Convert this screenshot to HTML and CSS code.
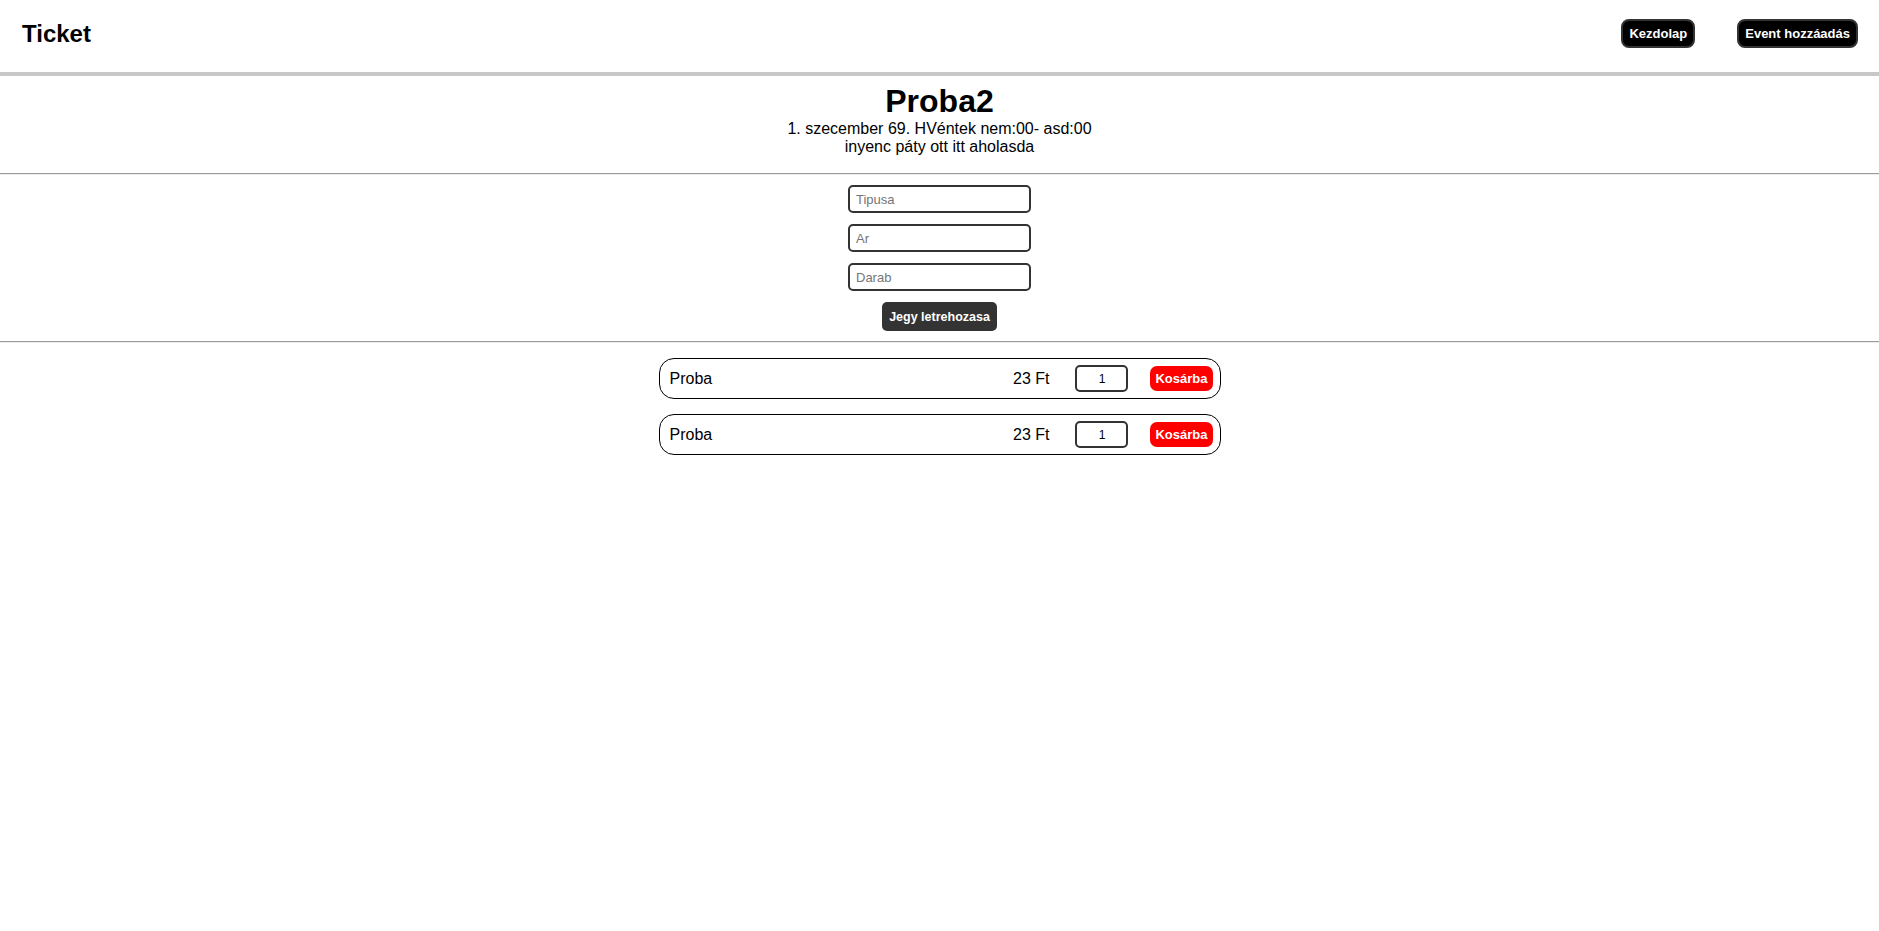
FILE: index.html
```html
<!DOCTYPE html>
<html lang="hu">
<head>
<meta charset="utf-8">
<title>Ticket</title>
<link rel="stylesheet" href="styles.css">
</head>
<body>
<header class="topbar">
  <div class="brand">Ticket</div>
  <nav class="nav">
    <button class="nav-btn">Kezdolap</button>
    <button class="nav-btn">Event hozzáadás</button>
  </nav>
</header>
<section class="event">
  <h1 class="event-title">Proba2</h1>
  <div class="event-line">1. szecember 69. HVéntek nem:00- asd:00</div>
  <div class="event-line">inyenc páty ott itt aholasda</div>
</section>
<hr class="divider">
<form class="ticket-form">
  <input class="field" type="text" placeholder="Tipusa">
  <input class="field" type="text" placeholder="Ar">
  <input class="field" type="text" placeholder="Darab">
  <button class="create-btn" type="button">Jegy letrehozasa</button>
</form>
<hr class="divider">
<section class="tickets">
  <div class="ticket">
    <span class="ticket-name">Proba</span>
    <span class="ticket-price">23 Ft</span>
    <input class="ticket-qty" type="text" value="1">
    <button class="buy-btn" type="button">Kosárba</button>
  </div>
  <div class="ticket">
    <span class="ticket-name">Proba</span>
    <span class="ticket-price">23 Ft</span>
    <input class="ticket-qty" type="text" value="1">
    <button class="buy-btn" type="button">Kosárba</button>
  </div>
</section>
</body>
</html>
```
FILE: styles.css
```css
html, body {
  margin: 0;
  padding: 0;
  background: #fff;
  color: #000;
  font-family: "Liberation Sans", Arial, sans-serif;
}

.topbar {
  display: flex;
  align-items: center;
  justify-content: space-between;
  padding: 19px 21px 24px 22px;
  border-bottom: 4px solid #c8c8c8;
}

.brand {
  font-size: 24px;
  font-weight: bold;
}

.nav {
  display: flex;
  gap: 42px;
}

.nav-btn {
  font-family: "Liberation Sans", Arial, sans-serif;
  font-size: 13px;
  font-weight: bold;
  line-height: 15px;
  color: #fff;
  background: #000;
  border: 2px solid #333;
  border-radius: 8px;
  padding: 5px 6px;
}

.event {
  text-align: center;
  padding: 7px 0 9px;
}

.event-title {
  margin: 0;
  font-size: 32px;
  font-weight: bold;
}

.event-line {
  font-size: 16px;
}

.divider {
  margin: 8px 0;
  border: 0;
  border-top: 1px solid #9a9a9a;
  border-bottom: 1px solid #eeeeee;
  height: 0;
}

.ticket-form {
  display: flex;
  flex-direction: column;
  align-items: center;
  gap: 11px;
  padding: 2px 0;
  margin: 0;
}

.field {
  box-sizing: border-box;
  width: 183px;
  height: 28px;
  border: 2px solid #333;
  border-radius: 5px;
  padding: 0 6px;
  font-family: "Liberation Sans", Arial, sans-serif;
  font-size: 13px;
  outline: none;
}

.field::placeholder {
  color: #757575;
}

.create-btn {
  box-sizing: border-box;
  height: 29px;
  padding: 0 7px;
  border: 0;
  border-radius: 5px;
  background: #333;
  color: #fff;
  font-family: "Liberation Sans", Arial, sans-serif;
  font-size: 12.5px;
  font-weight: bold;
}

.tickets {
  display: flex;
  flex-direction: column;
  align-items: center;
  gap: 15px;
  padding-top: 7px;
}

.ticket {
  box-sizing: border-box;
  display: flex;
  align-items: center;
  width: 562px;
  height: 41px;
  border: 1px solid #000;
  border-radius: 15px;
  padding: 0 7px 0 10px;
  font-size: 16px;
}

.ticket-name {
  flex: 1;
}

.ticket-price {
  margin-right: 26px;
}

.ticket-qty {
  box-sizing: border-box;
  width: 53px;
  height: 27px;
  border: 2px solid #333;
  border-radius: 5px;
  text-align: center;
  font-family: "Liberation Sans", Arial, sans-serif;
  font-size: 12px;
  padding: 0;
  margin-right: 22px;
  outline: none;
}

.buy-btn {
  box-sizing: border-box;
  height: 25px;
  padding: 0 5px;
  border: 0;
  border-radius: 7px;
  background: #ff0000;
  color: #fff;
  font-family: "Liberation Sans", Arial, sans-serif;
  font-size: 13px;
  font-weight: bold;
}
```
